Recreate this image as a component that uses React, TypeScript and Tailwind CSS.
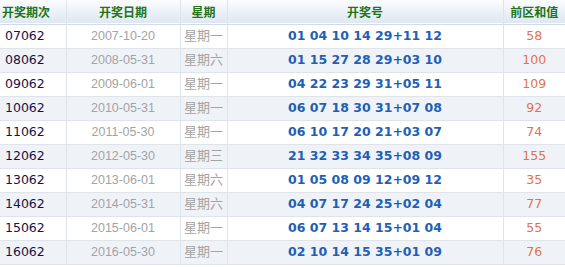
import React from 'react';

const rows = [
  { issue: '07062', date: '2007-10-20', week: '星期一', nums: '01 04 10 14 29+11 12', sum: '58' },
  { issue: '08062', date: '2008-05-31', week: '星期六', nums: '01 15 27 28 29+03 10', sum: '100' },
  { issue: '09062', date: '2009-06-01', week: '星期一', nums: '04 22 23 29 31+05 11', sum: '109' },
  { issue: '10062', date: '2010-05-31', week: '星期一', nums: '06 07 18 30 31+07 08', sum: '92' },
  { issue: '11062', date: '2011-05-30', week: '星期一', nums: '06 10 17 20 21+03 07', sum: '74' },
  { issue: '12062', date: '2012-05-30', week: '星期三', nums: '21 32 33 34 35+08 09', sum: '155' },
  { issue: '13062', date: '2013-06-01', week: '星期六', nums: '01 05 08 09 12+09 12', sum: '35' },
  { issue: '14062', date: '2014-05-31', week: '星期六', nums: '04 07 17 24 25+02 04', sum: '77' },
  { issue: '15062', date: '2015-06-01', week: '星期一', nums: '06 07 13 14 15+01 04', sum: '55' },
  { issue: '16062', date: '2016-05-30', week: '星期一', nums: '02 10 14 15 35+01 09', sum: '76' },
];

const cjk = "font-['DejaVu_Sans','Noto_Sans_CJK_SC',sans-serif]";

const App: React.FC = () => {
  return (
    <div className="w-[565px] h-[267px] bg-white overflow-hidden">
      <table className="w-[565px] table-fixed border-collapse">
        <colgroup>
          <col className="w-[66px]" />
          <col className="w-[114px]" />
          <col className="w-[47px]" />
          <col className="w-[276px]" />
          <col className="w-[62px]" />
        </colgroup>
        <thead>
          <tr className="h-[24px] bg-gradient-to-b from-[#fbfcfe] to-[#dfe7f0] border-b border-[#d3dce6]">
            {['开奖期次', '开奖日期', '星期', '开奖号', '前区和值'].map((h, i) => (
              <th
                key={h}
                className={`p-0 text-[12px] font-bold text-[#22741a] font-['Noto_Sans_CJK_SC',sans-serif] border-r border-[#dde4ec] last:border-r-0 ${
                  i === 0 ? 'text-left pl-[2px]' : 'text-center'
                }`}
              >
                {h}
              </th>
            ))}
          </tr>
        </thead>
        <tbody>
          {rows.map((r, i) => (
            <tr
              key={r.issue}
              className={`h-[24px] border-b border-[#dfe4ea] ${i % 2 === 1 ? 'bg-[#eff3f8]' : 'bg-white'}`}
            >
              <td className="p-0 pl-[5px] text-left text-[12.5px] text-[#16124a] font-['DejaVu_Sans',sans-serif] border-r border-[#dfe4ea]">
                {r.issue}
              </td>
              <td className="p-0 text-center text-[12.5px] text-[#a3a3a3] font-['Liberation_Sans',sans-serif] border-r border-[#dfe4ea]">
                {r.date}
              </td>
              <td className={`p-0 text-center text-[13px] text-[#a3a3a3] ${cjk} border-r border-[#dfe4ea]`}>
                {r.week}
              </td>
              <td className="p-0 text-center text-[12.5px] font-bold text-[#1f5fb5] font-['DejaVu_Sans',sans-serif] border-r border-[#dfe4ea]">
                {r.nums}
              </td>
              <td className="p-0 text-center text-[12.5px] text-[#e0734a] font-['DejaVu_Sans',sans-serif]">
                {r.sum}
              </td>
            </tr>
          ))}
        </tbody>
      </table>
    </div>
  );
};

export default App;
